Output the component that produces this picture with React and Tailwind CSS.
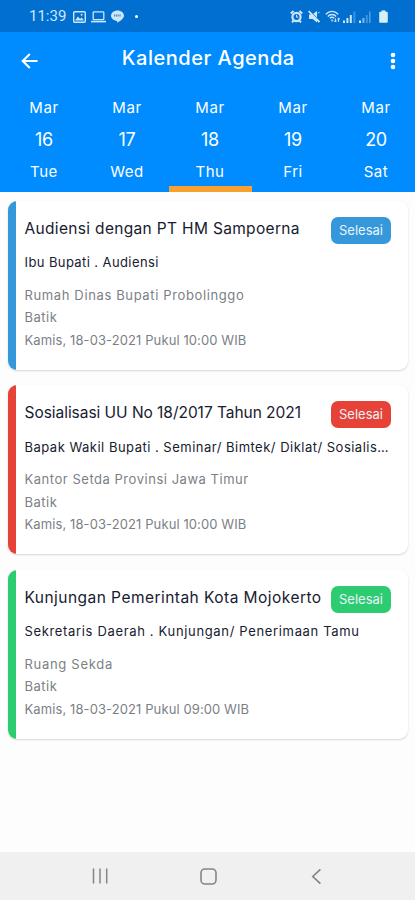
import React, { useState } from "react";

const days = [
  { month: "Mar", date: "16", day: "Tue" },
  { month: "Mar", date: "17", day: "Wed" },
  { month: "Mar", date: "18", day: "Thu" },
  { month: "Mar", date: "19", day: "Fri" },
  { month: "Mar", date: "20", day: "Sat" },
];

const agendas = [
  {
    title: "Audiensi dengan PT HM Sampoerna",
    titleClass: "tracking-[0.33px]",
    subtitle: "Ibu Bupati . Audiensi",
    subtitleClass: "tracking-[0.4px]",
    place: "Rumah Dinas Bupati Probolinggo",
    placeClass: "tracking-[0.63px]",
    dress: "Batik",
    time: "Kamis, 18-03-2021 Pukul 10:00 WIB",
    color: "bg-[#3498db]",
  },
  {
    title: "Sosialisasi UU No 18/2017 Tahun 2021",
    titleClass: "tracking-[-0.04px]",
    subtitle: "Bapak Wakil Bupati . Seminar/ Bimtek/ Diklat/ Sosialisasi",
    subtitleClass: "tracking-[0.49px]",
    place: "Kantor Setda Provinsi Jawa Timur",
    placeClass: "tracking-[0.53px]",
    dress: "Batik",
    time: "Kamis, 18-03-2021 Pukul 10:00 WIB",
    color: "bg-[#e74237]",
  },
  {
    title: "Kunjungan Pemerintah Kota Mojokerto",
    titleClass: "tracking-[0.46px]",
    subtitle: "Sekretaris Daerah . Kunjungan/ Penerimaan Tamu",
    subtitleClass: "tracking-[0.66px]",
    place: "Ruang Sekda",
    placeClass: "tracking-[0.7px]",
    dress: "Batik",
    time: "Kamis, 18-03-2021 Pukul 09:00 WIB",
    color: "bg-[#2ecc71]",
  },
];

const StatusBar = () => (
  <div className="flex h-8 items-center bg-[#006fcf] pl-[29px] pr-[27px] pt-[1px] text-[#cfe5fa]">
    <span className="font-[Roboto] text-[15px] leading-none">11:39</span>
    <svg className="ml-[7px]" width="13" height="12" viewBox="0 0 13 12">
      <rect x="0.7" y="0.7" width="11.6" height="10.6" rx="1" fill="none" stroke="currentColor" strokeWidth="1.4" />
      <path d="M2 9.6 L5 5.5 L7 8 L8.6 6.4 L11 9.6 Z" fill="currentColor" />
      <circle cx="8.6" cy="3.8" r="1" fill="currentColor" />
    </svg>
    <svg className="ml-[5px]" width="15" height="12" viewBox="0 0 15 12">
      <rect x="2.2" y="0.9" width="10.6" height="7.8" rx="0.8" fill="none" stroke="currentColor" strokeWidth="1.3" />
      <path d="M0 10.6 H15" stroke="currentColor" strokeWidth="1.6" />
    </svg>
    <svg className="ml-[5px]" width="13" height="13" viewBox="0 0 13 13">
      <path d="M6.5 0.4 C10.1 0.4 13 2.7 13 5.6 C13 8.6 9.4 11 6.3 12.8 C6.4 11.8 6.3 11.1 5.6 10.9 C2.4 10.5 0 8.3 0 5.6 C0 2.7 2.9 0.4 6.5 0.4 Z" fill="currentColor" />
      <path d="M3 5.6 H10" fill="none" stroke="#006fcf" strokeWidth="2" strokeDasharray="1.4 0.7" opacity="0.7" />
    </svg>
    <span className="ml-[11px] h-[3px] w-[3px] rounded-full bg-white" />
    <div className="ml-auto flex items-center">
      <svg width="13" height="13" viewBox="0 0 13 13">
        <circle cx="6.5" cy="7" r="4.1" fill="none" stroke="currentColor" strokeWidth="2.2" />
        <path d="M0.8 3.6 L3.6 1 M12.2 3.6 L9.4 1 M2 12.4 L3.6 10.6 M11 12.4 L9.4 10.6" stroke="currentColor" strokeWidth="2" />
        <path d="M6.5 4.8 V7.2 H8.3" fill="none" stroke="currentColor" />
      </svg>
      <svg className="ml-[5px]" width="12" height="13" viewBox="0 0 12 13">
        <path d="M1 4.4 H4 L9 9.2 V12.4 L4.6 9 H1 Z M5.2 3.8 L9 1 V7.4 Z" fill="currentColor" />
        <path d="M0.6 1.2 L11.4 12" stroke="currentColor" strokeWidth="1.8" />
        <path d="M10 3.4 L11.6 1.8" stroke="currentColor" />
      </svg>
      <svg className="ml-[5px]" width="16" height="13" viewBox="0 0 16 13" fill="none" stroke="currentColor">
        <path d="M0.8 4.2 C4.4 0.4 9.6 0.4 13.2 4.2" strokeWidth="1.4" />
        <path d="M2.8 6.4 C5.2 3.9 8.8 3.9 11.2 6.4" strokeWidth="1.4" />
        <path d="M4.8 8.3 C6.2 7 7.8 7 9.2 8.3" strokeWidth="1.4" />
        <path d="M7 9.4 V11.6" strokeWidth="1.4" />
        <path d="M10.4 12 V8.4 M9 10.6 L10.4 12 L11.8 10.6 M13.6 12 V8 M12.4 9.4 L13.6 8 L15 9.4" />
      </svg>
      <svg className="ml-[2px]" width="13" height="12" viewBox="0 0 13 12" fill="currentColor">
        <rect x="0" y="9.5" width="2" height="2.5" />
        <rect x="3.4" y="7" width="2" height="5" />
        <rect x="6.8" y="4" width="2" height="8" />
        <rect x="10.4" y="0.5" width="2" height="11.5" opacity="0.3" />
      </svg>
      <svg className="ml-[3px]" width="13" height="12" viewBox="0 0 13 12" fill="currentColor">
        <rect x="0" y="9.5" width="2" height="2.5" />
        <rect x="3.4" y="7" width="2" height="5" opacity="0.6" />
        <rect x="6.8" y="4" width="2" height="8" opacity="0.3" />
        <rect x="10" y="0.5" width="1.6" height="11.5" opacity="0.4" />
      </svg>
      <svg className="ml-[7px]" width="9" height="13" viewBox="0 0 9 13" fill="#d6f0fa">
        <rect x="2.6" y="0.4" width="3.8" height="2" />
        <rect x="0.2" y="1.8" width="8.6" height="11" rx="1" />
      </svg>
    </div>
  </div>
);

const AppBar = () => (
  <div className="flex h-[54px] items-center justify-between pl-[20.5px] pr-[19px] pt-[3px]">
    <svg width="17" height="16" viewBox="0 0 17 16" fill="none" stroke="white" strokeWidth="2.1">
      <path d="M8.8 0.9 L1.7 8 L8.8 15.1 M1.9 8 H16.5" />
    </svg>
    <h1 className="-mt-[6px] mr-[11px] text-[20px] font-medium leading-none tracking-[0.52px]">Kalender Agenda</h1>
    <svg width="6" height="18" viewBox="0 0 6 18" fill="white">
      <circle cx="3" cy="3" r="2.3" />
      <circle cx="3" cy="9" r="2.3" />
      <circle cx="3" cy="15" r="2.3" />
    </svg>
  </div>
);

const DayTabs = ({ active, onSelect }) => (
  <div className="flex h-[106px] pl-[2.5px]">
    {days.map(({ month, date, day }, index) => (
      <button
        key={date}
        onClick={() => onSelect(index)}
        className={`flex w-[83px] shrink-0 flex-col items-center border-b-[6px] pt-[6px] text-[15px] leading-8 tracking-[0.55px] ${
          index === active ? "border-[#f9a12e]" : "border-transparent"
        }`}
      >
        <span>{month}</span>
        <span className="text-[18px] tracking-[-0.3px]">{date}</span>
        <span>{day}</span>
      </button>
    ))}
  </div>
);

const AgendaCard = ({ title, titleClass, subtitle, subtitleClass, place, placeClass, dress, time, color }) => (
  <div className="flex h-[169px] overflow-hidden rounded-[9px] bg-white shadow-[0_1px_2px_rgba(0,0,0,0.16)]">
    <div className={`w-2 shrink-0 ${color}`} />
    <div className="min-w-0 flex-1 pl-[8.5px] pr-[17px] pt-4 text-[#17202f]">
      <div className="flex items-start justify-between">
        <h2 className={`whitespace-nowrap text-[15.5px] leading-6 ${titleClass}`}>{title}</h2>
        <span className={`h-[27px] w-[60px] shrink-0 rounded-[7px] text-center text-[13px] leading-[26px] text-[#e8f3fb] ${color}`}>
          Selesai
        </span>
      </div>
      <p className={`-mr-[3px] mt-[8.5px] truncate text-[13px] leading-5 ${subtitleClass}`}>{subtitle}</p>
      <div className="mt-[11.5px] text-[13px] leading-[22.7px] text-[#7b7f86]">
        <p className={placeClass}>{place}</p>
        <p className="tracking-[0.5px]">{dress}</p>
        <p className="tracking-[0.1px]">{time}</p>
      </div>
    </div>
  </div>
);

const NavBar = () => (
  <div className="flex h-12 items-center bg-[#f0f0f0] pl-[92px] text-[#858585]">
    <svg width="16" height="16" viewBox="0 0 16 16" stroke="currentColor" strokeWidth="1.5">
      <path d="M1.5 0.5 V15.5 M8 0.5 V15.5 M14.7 0.5 V15.5" />
    </svg>
    <svg className="ml-[92px]" width="17" height="17" viewBox="0 0 17 17" fill="none" stroke="currentColor" strokeWidth="1.6">
      <rect x="1" y="1" width="15" height="15" rx="4" />
    </svg>
    <svg className="ml-[94px]" width="11" height="17" viewBox="0 0 11 17" fill="none" stroke="currentColor" strokeWidth="1.7">
      <path d="M9.4 1.3 L1.8 8.5 L9.4 15.7" />
    </svg>
  </div>
);

const App = () => {
  const [active, setActive] = useState(2);

  return (
    <div className="flex h-[900px] w-[415px] flex-col overflow-hidden bg-[#fdfdfd] font-[Inter,sans-serif]">
      <StatusBar />
      <header className="bg-[#008cff] text-white">
        <AppBar />
        <DayTabs active={active} onSelect={setActive} />
      </header>
      <main className="flex flex-1 flex-col gap-[15.5px] pl-2 pr-[7px] pt-[8.5px]">
        {agendas.map((agenda) => (
          <AgendaCard key={agenda.title} {...agenda} />
        ))}
      </main>
      <NavBar />
    </div>
  );
};

export default App;
